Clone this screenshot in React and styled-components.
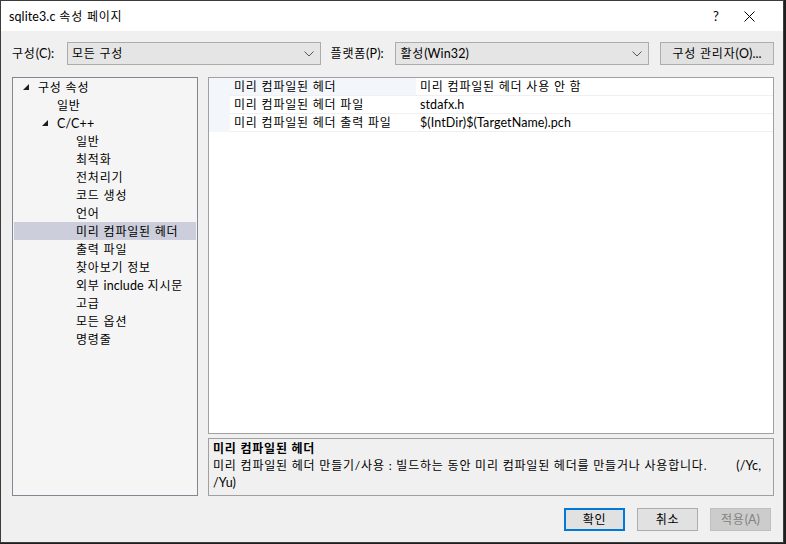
import React from "react";
import styled, { createGlobalStyle } from "styled-components";

const Global = createGlobalStyle`
  html, body { margin: 0; padding: 0; background: #1f1f1f; }
  body { font-family: Lato, "Noto Sans CJK KR", sans-serif; font-size: 12px; color: #000; }
  * { box-sizing: border-box; }
`;

const FONT = `Lato, "Noto Sans CJK KR", sans-serif`;

const Window = styled.div`
  width: 784px;
  height: 543px;
  background: #f0f0f0;
  border: 1px solid #3c3c3c;
  display: flex;
  flex-direction: column;
  font-family: ${FONT};
  font-size: 12px;
  letter-spacing: 0.8px;
`;

const Lat = styled.span`
  letter-spacing: 0.1px;
  font-size: 12.5px;
`;

const TitleBar = styled.div`
  height: 30px;
  background: #fff;
  display: flex;
  align-items: center;
  padding-left: 8px;
  padding-right: 11px;
`;

const Title = styled.div`
  flex: 1;
  font-size: 12px;
  line-height: 16px;
  padding-top: 1px;
`;

const TitleButton = styled.div`
  width: ${(p) => p.w}px;
  height: 30px;
  display: flex;
  align-items: center;
  justify-content: center;
  font-size: 13px;
  letter-spacing: 0;
`;

const Body = styled.div`
  flex: 1;
  display: flex;
  flex-direction: column;
  padding: 11px 9px 0 11px;
`;

const Toolbar = styled.div`
  display: flex;
  align-items: center;
  height: 23px;
`;

const Label = styled.div`
  width: ${(p) => p.w}px;
  line-height: 16px;
  white-space: nowrap;
`;

const Combo = styled.div`
  width: ${(p) => p.w}px;
  height: 23px;
  background: #e5e5e5;
  border: 1px solid #acacac;
  display: flex;
  align-items: center;
  padding-left: 4px;
  padding-right: 6px;
  margin-right: ${(p) => p.mr || 0}px;
`;

const ComboText = styled.div`
  flex: 1;
  line-height: 16px;
  padding-top: 1px;
`;

const Button = styled.div`
  width: ${(p) => p.w || 61}px;
  height: 23px;
  display: flex;
  align-items: center;
  justify-content: center;
  background: ${(p) => (p.disabled ? "#cccccc" : "#e1e1e1")};
  border: ${(p) => (p.primary ? "2px solid #0078d7" : p.disabled ? "1px solid #bfbfbf" : "1px solid #adadad")};
  color: ${(p) => (p.disabled ? "#838383" : "#000")};
  line-height: 16px;
  white-space: nowrap;
  padding-top: 1px;
`;

const Main = styled.div`
  display: flex;
  margin-top: 12px;
  height: 419px;
  gap: 10px;
`;

const Tree = styled.div`
  width: 186px;
  height: 100%;
  background: #f5f5f5;
  border: 1px solid #828790;
  padding: 0 1px;
`;

const TreeRow = styled.div`
  height: 18px;
  display: flex;
  align-items: center;
  padding-left: ${(p) => 9 + p.level * 19}px;
  padding-top: 1px;
  background: ${(p) => (p.selected ? "#cccedb" : "transparent")};
  line-height: 16px;
  white-space: nowrap;
`;

const Toggle = styled.div`
  width: 15px;
  display: flex;
  align-items: center;
  margin-top: -1px;
`;

const RightCol = styled.div`
  width: 566px;
  display: flex;
  flex-direction: column;
  gap: 4px;
`;

const Grid = styled.div`
  height: 357px;
  background: #fff;
  border: 1px solid #a0a0a0;
  display: flex;
  flex-direction: column;
`;

const GridRow = styled.div`
  display: flex;
  height: 18px;
`;

const Margin = styled.div`
  width: 21px;
  background: #f3f6fb;
`;

const NameCell = styled.div`
  width: 186px;
  padding-left: 4px;
  padding-top: 1px;
  display: flex;
  align-items: center;
  background: ${(p) => (p.active ? "#f3f6fb" : "#fff")};
  border-bottom: 1px solid #f0f0f0;
  line-height: 16px;
  white-space: nowrap;
`;

const ValueCell = styled.div`
  flex: 1;
  padding-left: 4px;
  padding-top: 1px;
  display: flex;
  align-items: center;
  border-bottom: 1px solid #f0f0f0;
  line-height: 16px;
  white-space: nowrap;
`;

const Desc = styled.div`
  height: 58px;
  border: 1px solid #a0a0a0;
  background: #f0f0f0;
  padding: 1px 4px 0 4px;
  line-height: 17px;
`;

const DescTitle = styled.div`
  font-weight: bold;
`;

const DescLine = styled.div`
  white-space: nowrap;
`;

const Gap = styled.span`
  display: inline-block;
  width: ${(p) => p.w}px;
`;

const Footer = styled.div`
  display: flex;
  justify-content: flex-end;
  gap: 12px;
  margin-top: 12px;
  padding-right: 3px;
`;

const Chevron = () => (
  <svg width="10" height="6" viewBox="0 0 10 6">
    <polyline points="0.5,0.5 5,5 9.5,0.5" fill="none" stroke="#555" strokeWidth="1" />
  </svg>
);

const Tri = () => (
  <svg width="6" height="6" viewBox="0 0 6 6">
    <polygon points="6,0 6,6 0,6" fill="#1e1e1e" />
  </svg>
);

const treeItems = [
  { t: "구성 속성", l: 0, open: true },
  { t: "일반", l: 1 },
  { t: <Lat>C/C++</Lat>, l: 1, open: true },
  { t: "일반", l: 2 },
  { t: "최적화", l: 2 },
  { t: "전처리기", l: 2 },
  { t: "코드 생성", l: 2 },
  { t: "언어", l: 2 },
  { t: "미리 컴파일된 헤더", l: 2, sel: true },
  { t: "출력 파일", l: 2 },
  { t: "찾아보기 정보", l: 2 },
  { t: <>외부 <Lat>include</Lat> 지시문</>, l: 2 },
  { t: "고급", l: 2 },
  { t: "모든 옵션", l: 2 },
  { t: "명령줄", l: 2 },
];

const props = [
  ["미리 컴파일된 헤더", "미리 컴파일된 헤더 사용 안 함"],
  ["미리 컴파일된 헤더 파일", <Lat>stdafx.h</Lat>],
  ["미리 컴파일된 헤더 출력 파일", <Lat>$(IntDir)$(TargetName).pch</Lat>],
];

export default function App() {
  return (
    <>
      <Global />
      <Window>
        <TitleBar>
          <Title>
            <Lat>sqlite3.c</Lat> 속성 페이지
          </Title>
          <TitleButton w={20}>?</TitleButton>
          <TitleButton w={46}>
            <svg width="11" height="11" viewBox="0 0 11 11">
              <path d="M0.5 0.5 L10.5 10.5 M10.5 0.5 L0.5 10.5" stroke="#000" strokeWidth="1" />
            </svg>
          </TitleButton>
        </TitleBar>
        <Body>
          <Toolbar>
            <Label w={55}>
              구성<Lat>(C):</Lat>
            </Label>
            <Combo w={254} mr={10}>
              <ComboText>모든 구성</ComboText>
              <Chevron />
            </Combo>
            <Label w={65}>
              플랫폼<Lat>(P):</Lat>
            </Label>
            <Combo w={254} mr={11}>
              <ComboText>
                활성<Lat>(Win32)</Lat>
              </ComboText>
              <Chevron />
            </Combo>
            <Button w={114}>
              <span>
                구성 관리자<Lat>(O)...</Lat>
              </span>
            </Button>
          </Toolbar>
          <Main>
            <Tree>
              {treeItems.map((it, i) => (
                <TreeRow key={i} level={it.l} selected={it.sel}>
                  <Toggle>{it.open ? <Tri /> : null}</Toggle>
                  <span>{it.t}</span>
                </TreeRow>
              ))}
            </Tree>
            <RightCol>
              <Grid>
                {props.map(([n, v], i) => (
                  <GridRow key={i}>
                    <Margin />
                    <NameCell active={i === 0}>
                      <span>{n}</span>
                    </NameCell>
                    <ValueCell>
                      <span>{v}</span>
                    </ValueCell>
                  </GridRow>
                ))}
              </Grid>
              <Desc>
                <DescTitle>미리 컴파일된 헤더</DescTitle>
                <DescLine>
                  미리 컴파일된 헤더 만들기/사용 : 빌드하는 동안 미리 컴파일된 헤더를 만들거나 사용합니다.
                  <Gap w={29} />
                  <Lat>(/Yc,</Lat>
                </DescLine>
                <DescLine>
                  <Lat>/Yu)</Lat>
                </DescLine>
              </Desc>
            </RightCol>
          </Main>
          <Footer>
            <Button primary>확인</Button>
            <Button>취소</Button>
            <Button disabled>
              <span>
                적용<Lat>(A)</Lat>
              </span>
            </Button>
          </Footer>
        </Body>
      </Window>
    </>
  );
}
